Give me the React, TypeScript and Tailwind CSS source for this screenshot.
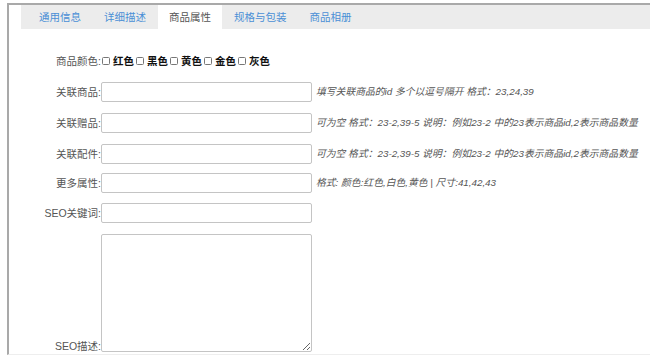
import React from "react";

const font = { fontFamily: '"Liberation Sans", "Noto Sans CJK SC", sans-serif' };

function Box() {
  return <span className="inline-block shrink-0 w-[8px] h-[8px] border border-[#777] rounded-[1.5px] bg-white mr-[3px]" />;
}

function Row({ label, hint, mt }: { label: string; hint?: string; mt: string }) {
  return (
    <div className={`flex items-center ${mt}`}>
      <div className="w-[77px] shrink-0 text-right text-[#555] whitespace-nowrap">{label}</div>
      <input
        className="w-[211px] shrink-0 h-[20px] border border-[#c4c4c4] rounded-[2px] bg-white outline-none"
        readOnly
      />
      {hint ? <div className="ml-[4px] italic text-[#555] whitespace-nowrap text-[9.8px]">{hint}</div> : null}
    </div>
  );
}

export default function App() {
  const tabs = ["通用信息", "详细描述", "商品属性", "规格与包装", "商品相册"];
  const colors = ["红色", "黑色", "黄色", "金色", "灰色"];
  return (
    <div className="w-[650px] h-[355px] bg-white overflow-hidden text-[10.5px] leading-none" style={font}>
      <div className="ml-[7px] mt-[3px] h-[352px] border-l-[2px] border-t-[2px] border-[#a9a9a9] border-b border-b-[#eeeeee] pl-[12px] flex flex-col">
        <div className="h-[24px] shrink-0 bg-[#ececec] flex pl-[7px]">
          {tabs.map((t, i) => (
            <div
              key={t}
              className={`h-full flex items-center px-[11px] mr-[1px] ${i === 2 ? "bg-white text-[#555]" : "text-[#4a8fd6]"}`}
            >
              {t}
            </div>
          ))}
        </div>
        <div className="flex-1 pl-[3px]">
          <div className="flex items-center mt-[22px] h-[20px]">
            <div className="w-[77px] shrink-0 text-right text-[#555] whitespace-nowrap">商品颜色:</div>
            <div className="flex items-center ml-[1px]">
              {colors.map((c) => (
                <span key={c} className="flex items-center mr-[2px]">
                  <Box />
                  <span className="font-bold text-[#111] whitespace-nowrap">{c}</span>
                </span>
              ))}
            </div>
          </div>
          <Row label="关联商品:" mt="mt-[11px]" hint="填写关联商品的id 多个以逗号隔开 格式：23,24,39" />
          <Row label="关联赠品:" mt="mt-[11px]" hint="可为空 格式：23-2,39-5 说明：例如23-2 中的23表示商品id,2表示商品数量" />
          <Row label="关联配件:" mt="mt-[11px]" hint="可为空 格式：23-2,39-5 说明：例如23-2 中的23表示商品id,2表示商品数量" />
          <Row label="更多属性:" mt="mt-[9px]" hint="格式: 颜色:红色,白色,黄色 | 尺寸:41,42,43" />
          <Row label="SEO关键词:" mt="mt-[10px]" />
          <div className="flex items-end mt-[11px]">
            <div className="w-[77px] shrink-0 text-right text-[#555] pb-[1px] whitespace-nowrap">SEO描述:</div>
            <textarea
              className="w-[211px] shrink-0 h-[118px] border border-[#c4c4c4] rounded-[2px] bg-white outline-none resize"
              readOnly
            />
          </div>
        </div>
      </div>
    </div>
  );
}
